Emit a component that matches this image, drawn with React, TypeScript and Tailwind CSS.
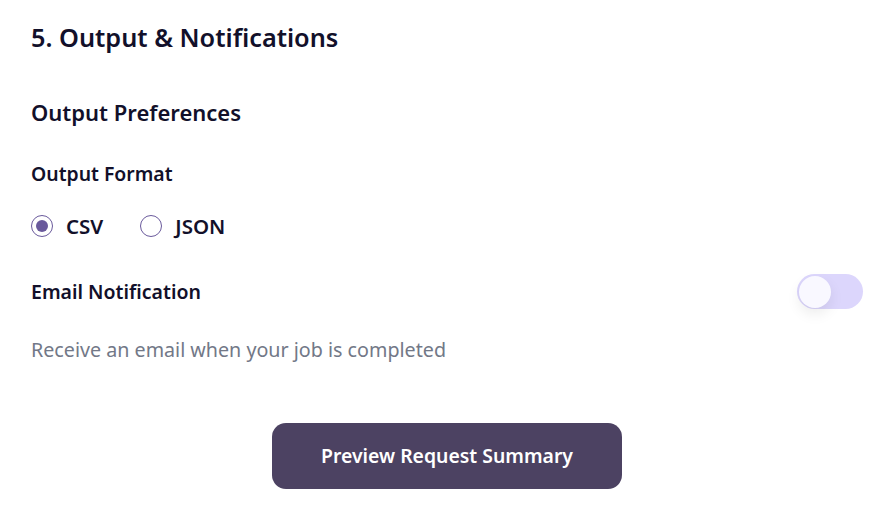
import React, { useState } from 'react';

const font = { fontFamily: '"Noto Sans", "Open Sans", sans-serif' };

export default function App() {
  const [format, setFormat] = useState<'csv' | 'json'>('csv');
  const [email, setEmail] = useState(false);

  return (
    <div style={font} className="w-[894px] h-[514px] bg-white text-[#12102a] px-[31px] pt-[20px]">
      <h2 className="text-[25.3px] font-semibold leading-[34px]">5. Output &amp; Notifications</h2>

      <h3 className="mt-[43px] text-[22px] font-semibold leading-[30px]">Output Preferences</h3>

      <div className="mt-[34px] text-[19.4px] font-semibold leading-[26px]">Output Format</div>

      <div className="mt-[27px] flex items-center gap-[37px]">
        {(['csv', 'json'] as const).map((f) => (
          <button key={f} onClick={() => setFormat(f)} className="flex items-center gap-[13px]">
            <span className="w-[22px] h-[22px] rounded-full border-[1.5px] border-[#6a5a9c] flex items-center justify-center bg-white">
              {format === f && <span className="w-[12px] h-[12px] rounded-full bg-[#6a5a9c]" />}
            </span>
            <span className="text-[20.5px] font-semibold leading-[24px]">{f.toUpperCase()}</span>
          </button>
        ))}
      </div>

      <div className="mt-[36px] flex items-center justify-between">
        <div className="text-[19.5px] font-semibold leading-[26px]">Email Notification</div>
        <button
          onClick={() => setEmail(!email)}
          className={`w-[66px] h-[35px] rounded-full flex items-center p-[1.5px] ${email ? 'bg-[#6a5a9c] justify-end' : 'bg-[#dcd6fc] justify-start'}`}
        >
          <span className="w-[32px] h-[32px] rounded-full bg-[#f9f8ff] shadow-[0_6px_14px_rgba(0,0,0,0.08)]" />
        </button>
      </div>

      <p className="mt-[28px] text-[19.7px] leading-[26px] text-[#727887]">Receive an email when your job is completed</p>

      <div className="mt-[60px] flex justify-center">
        <button className="w-[350px] h-[66px] rounded-[14px] bg-[#4c4262] text-white text-[19.4px] font-semibold">
          Preview Request Summary
        </button>
      </div>
    </div>
  );
}
